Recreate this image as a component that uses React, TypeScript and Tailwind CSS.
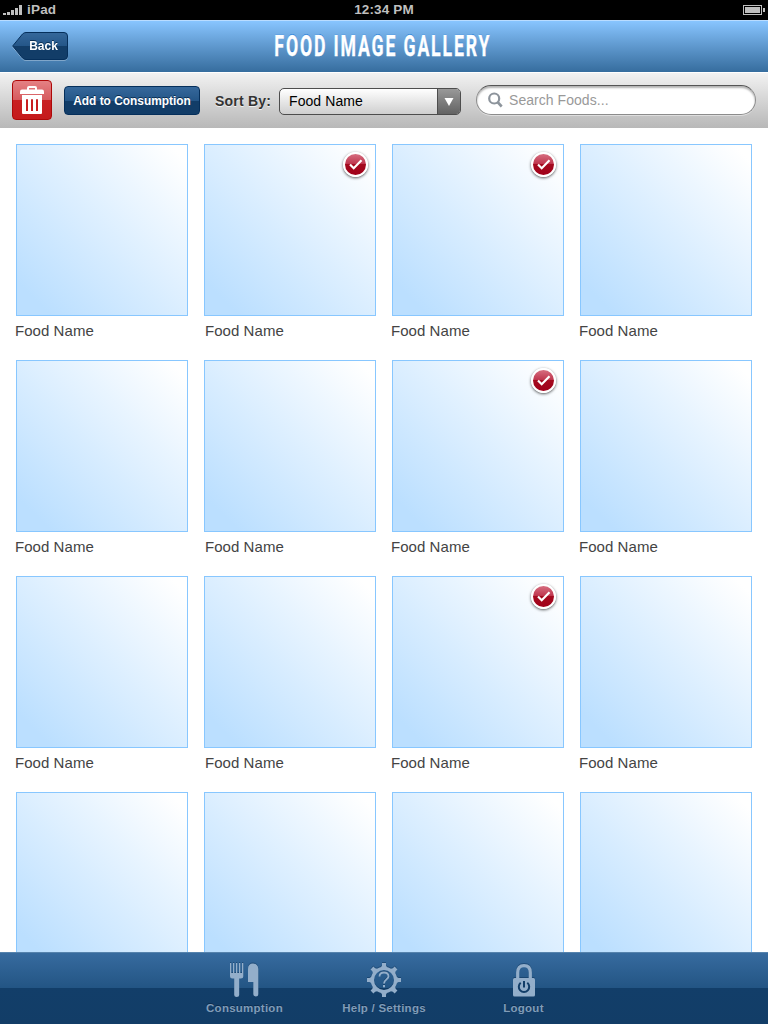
import React from "react";

const font = "font-['Liberation_Sans',Arial,sans-serif]";
const selected = [1, 2, 6, 10];
const labelShift = ["-ml-[1px]", "ml-px", "-ml-[1px]", "-ml-[1px]"];

function StatusBar() {
  return (
    <div className="grid h-5 shrink-0 grid-cols-3 items-center bg-black text-[13px] font-bold leading-5 text-[#bfbfbf]">
      <div className="flex items-center pl-[3px]">
        <svg width="19" height="11" viewBox="0 0 19 11" fill="#bfbfbf" shapeRendering="crispEdges">
          <rect x="0" y="8" width="3" height="2" />
          <rect x="4" y="7" width="3" height="3" />
          <rect x="8" y="5" width="3" height="5" />
          <rect x="12" y="3" width="3" height="7" />
          <rect x="16" y="0" width="3" height="10" />
        </svg>
        <span className="ml-[5px] text-[13.5px] tracking-[0.2px]">iPad</span>
      </div>
      <div className="text-center text-[13.5px] tracking-[0.15px]">12:34 PM</div>
      <div className="flex justify-end pr-[3px]">
        <svg width="22" height="10" viewBox="0 0 22 10" fill="#bfbfbf" shapeRendering="crispEdges">
          <path d="M0 0h19v10H0zM1 1v8h17V1z" fillRule="evenodd" />
          <rect x="2" y="2" width="15" height="6" />
          <rect x="20" y="3" width="2" height="4" />
        </svg>
      </div>
    </div>
  );
}

function Header() {
  return (
    <header className="grid h-[52px] shrink-0 grid-cols-[80px_1fr_80px] items-center border-t border-[#b9dcff] bg-linear-to-b from-[#88c5ff] to-[#366d9e] pb-px">
      <button className="relative ml-3 h-7 w-14 drop-shadow-[0_1px_0_rgba(255,255,255,0.3)]">
        <svg className="absolute inset-0" width="56" height="28" viewBox="0 0 56 28">
          <defs>
            <linearGradient id="back" x1="0" y1="0" x2="0" y2="1">
              <stop offset="0" stopColor="#36689b" />
              <stop offset="0.5" stopColor="#245688" />
              <stop offset="0.5" stopColor="#123d68" />
              <stop offset="1" stopColor="#123d68" />
            </linearGradient>
          </defs>
          <path d="M.7 14 10.5 2Q12 .5 14 .5H52Q55.500.500 55.500 4V24Q55.500 27.500 52 27.500H14Q12 27.500 10.500 26Z" fill="url(#back)" stroke="#052f5b" />
        </svg>
        <span className="relative block pl-[7px] text-center text-[12px] font-bold leading-7 text-white [text-shadow:0_-1px_0_#092d50]">Back</span>
      </button>
      <h1 className="flex justify-center whitespace-nowrap">
        <span className="origin-center -translate-x-px scale-x-[0.59] font-[Roboto,sans-serif] text-[30px] font-bold leading-[50px] tracking-[3.1px] text-white [text-shadow:0_-1px_0_#1c7bd8] [-webkit-text-stroke:0.4px_#fff]">FOOD IMAGE GALLERY</span>
      </h1>
    </header>
  );
}

function Toolbar() {
  return (
    <div className="flex h-14 shrink-0 items-center border-t border-white bg-linear-to-b from-[#f2f2f2] to-[#b8b8b8] pb-px pl-3">
      <button className="flex size-10 items-center justify-center rounded-[4px] border border-[#ad0808] bg-[linear-gradient(#e48184,#d65a5e_50%,#c92022_50%,#c51a1c)]">
        <svg width="24" height="28" viewBox="0 0 24 28" fill="#fff">
          <path d="M7 4V2Q7 0 9 0h6q2 0 2 2v2h-2V2H9v2z" />
          <path d="M2 3.500h20q2 0 2 2V8H0V5.500q0-2 2-2z" />
          <path fillRule="evenodd" d="M2 9h20v18q0 1-1 1H3q-1 0-1-1zM6 13v12h2V13zm5 0v12h2V13zm5 0v12h2V13z" />
        </svg>
      </button>
      <button className="ml-3 mt-px h-[29px] w-[136px] rounded-[4px] border border-[#052f5b] bg-[linear-gradient(#36689b,#245688_50%,#123d68_50%,#123d68)] pt-px text-[11.900px] font-bold leading-[26px] whitespace-nowrap text-white [text-shadow:0_-1px_0_#092d50]">
        Add to Consumption
      </button>
      <span className="ml-[15px] mt-[2px] w-16 text-[14px] font-bold tracking-[0.2px] whitespace-nowrap text-[#333] [text-shadow:0_1px_0_#f2f2f2]">Sort By:</span>
      <button className="mt-[3px] flex h-[27px] w-[182px] overflow-hidden rounded-[5px] border border-[#4d4d4d] bg-linear-to-b from-white to-[#cfcfcf] text-left">
        <span className="flex-1 pl-[9px] text-[14px] leading-[25px] tracking-[0.08px] text-black">Food Name</span>
        <span className="flex w-[23px] items-center justify-center border-l border-[#4d4d4d] bg-linear-to-b from-[#999] to-[#636363]">
          <svg width="10" height="8" viewBox="0 0 10 8"><path d="M.5 0h9L5 8z" fill="#fff" /></svg>
        </span>
      </button>
      <label className="ml-[15px] flex h-[30px] w-[280px] items-center rounded-full border border-[#8c8c8c] border-t-[#555] bg-white pl-[11px] shadow-[inset_0_2px_2px_rgba(0,0,0,0.3),0_1px_0_#dedede]">
        <svg width="15" height="16" viewBox="0 0 15 16" fill="none" stroke="#8d949c">
          <circle cx="6.200" cy="6.500" r="5" strokeWidth="2.200" />
          <path d="m9.500 10 4.200 4.500" strokeWidth="2.600" />
        </svg>
        <input className="ml-[6px] mt-px w-[220px] bg-transparent text-[14px] tracking-[0.05px] outline-none placeholder:text-[#999]" placeholder="Search Foods..." />
      </label>
    </div>
  );
}

function Badge() {
  return (
    <span className="absolute top-[7px] right-[7px] flex size-[25px] items-center justify-center rounded-full border-[2.500px] border-white bg-[linear-gradient(#d66e80,#c03850_45%,#a40a1e_50%,#a1001a)] shadow-[0_1px_3px_rgba(0,0,0,0.65)]">
      <svg width="14" height="11" viewBox="0 0 14 11" fill="none" stroke="#fff" strokeWidth="2.200"><path d="m1 5.500 3.700 3.700L12.500 1.300" /></svg>
    </span>
  );
}

function Gallery() {
  return (
    <main className="grid min-h-0 flex-1 auto-rows-[200px] grid-cols-[repeat(4,172px)] content-start gap-4 overflow-hidden bg-white px-4 pt-4">
      {Array.from({ length: 16 }, (_, i) => (
        <div key={i}>
          <div className="relative h-[172px] border border-[#88c7ff] bg-[linear-gradient(45deg,#bbdfff_10%,#fff_95%)]">
            {selected.includes(i) && <Badge />}
          </div>
          {i < 12 && <p className={`${labelShift[i % 4]} mt-[4px] text-[15px] leading-[22px] tracking-[0.05px] text-[#444]`}>Food Name</p>}
        </div>
      ))}
    </main>
  );
}

function ForkKnife() {
  return (
    <svg width="30" height="34" viewBox="0 0 30 34" fill="currentColor">
      <path d="M0 0h1.300v10h1.700V0h1.300v10H6V0h1.300v10H9V0h1.300v10H12V0h1.300v13q0 2.500-2.500 2.500H9.200V32q0 2-2.500 2t-2.500-2V15.500H2.500Q0 15.500 0 13z" />
      <path d="M18 19V6q0-5.500 5-5.500T28.300 6v25q0 2.500-2.600 2.500T23.300 31V19z" />
    </svg>
  );
}

function Gear() {
  return (
    <svg width="34" height="34" viewBox="-17 -17 34 34" fill="currentColor">
      {[0, 45, 90, 135, 180, 225, 270, 315].map((a) => (
        <path key={a} d="M-3.500-12l1.500-2.500V-17h4v2.500l1.500 2.500z" transform={`rotate(${a})`} />
      ))}
      <circle r="11.600" fill="none" stroke="currentColor" strokeWidth="3.200" />
      <path d="M-4.500-3.500Q-4.500-7.500 0-7.500T4.500-3.700C4.500-.5 0-.7 0 3.500" fill="none" stroke="currentColor" strokeWidth="1.800" />
      <rect x="-1" y="5" width="2" height="2.300" />
    </svg>
  );
}

function Lock() {
  return (
    <svg width="22" height="33" viewBox="0 0 22 33">
      <path d="M4.700 15V8.500Q4.700 1.700 11 1.700t6.300 6.800V15" fill="none" stroke="currentColor" strokeWidth="3.200" />
      <rect y="14" width="22" height="18.500" rx="1.500" fill="currentColor" />
      <path d="M7.700 18.800a5.200 5.200 0 1 0 6.600 0M11 17v6.500" fill="none" stroke="#123d68" strokeWidth="2" />
    </svg>
  );
}

const tabs = [
  { label: "Consumption", icon: <ForkKnife /> },
  { label: "Help / Settings", icon: <Gear /> },
  { label: "Logout", icon: <Lock /> },
];

function TabBar() {
  return (
    <nav className="flex h-[72px] shrink-0 justify-center border-t border-[#5683ad] bg-[linear-gradient(#376b9f,#235584_49%,#123e69_50%,#123d67)]">
      {tabs.map((t) => (
        <div key={t.label} className="flex w-[139.500px] flex-col items-center pt-[9px] text-[#93aeca]">
          <div className="flex h-[36px] items-center drop-shadow-[0_-1px_0_rgba(5,40,75,0.4)]">{t.icon}</div>
          <span className="mt-[2px] text-[11.500px] font-bold leading-4 tracking-[0.25px] whitespace-nowrap text-[#809cb8] [text-shadow:0_-1px_0_#0a2b4d]">{t.label}</span>
        </div>
      ))}
    </nav>
  );
}

export default function App() {
  return (
    <div className={`flex h-[1024px] w-[768px] flex-col overflow-hidden ${font}`}>
      <StatusBar />
      <Header />
      <Toolbar />
      <Gallery />
      <TabBar />
    </div>
  );
}
